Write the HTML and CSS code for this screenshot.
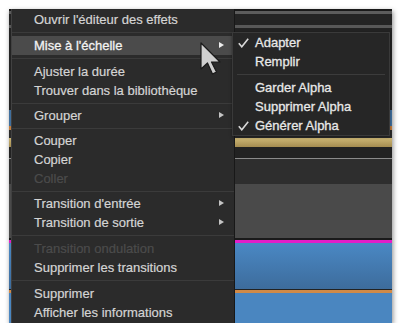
FILE: index.html
```html
<!DOCTYPE html>
<html lang="fr">
<head>
<meta charset="utf-8">
<link rel="stylesheet" href="styles.css">
</head>
<body>
<div class="frame">
  <div class="app">
    <div class="bar b1"></div>
    <div class="bar b2"></div>
    <div class="bar b3"></div>
    <div class="bar b4"></div>
    <div class="bar b5"></div>
    <div class="bar b6"></div>
    <div class="bar b7"></div>
    <div class="bar b8"></div>
    <div class="bar b9"></div>
    <div class="bar b10"></div>
    <div class="bar b11"></div>
    <div class="bar b12"></div>
    <div class="bar b13"></div>
    <div class="bar b14"></div>
    <div class="bar b15"></div>
    <div class="bar b16"></div>
    <div class="bar b17"></div>
    <div class="bar b18"></div>
    <div class="bar b19"></div>
  </div>

  <div class="menu">
    <div class="item">Ouvrir l'éditeur des effets</div>
    <div class="sep sep7"></div>
    <div class="item active sub">Mise à l'échelle</div>
    <div class="sep sep7"></div>
    <div class="item">Ajuster la durée</div>
    <div class="item">Trouver dans la bibliothèque</div>
    <div class="sep"></div>
    <div class="item sub">Grouper</div>
    <div class="sep"></div>
    <div class="item">Couper</div>
    <div class="item">Copier</div>
    <div class="item disabled">Coller</div>
    <div class="sep"></div>
    <div class="item sub">Transition d'entrée</div>
    <div class="item sub">Transition de sortie</div>
    <div class="sep sep7"></div>
    <div class="item disabled">Transition ondulation</div>
    <div class="item">Supprimer les transitions</div>
    <div class="sep sep7"></div>
    <div class="item">Supprimer</div>
    <div class="item">Afficher les informations</div>
  </div>

  <div class="submenu">
    <div class="sitem checked"><svg class="check" width="11" height="10" viewBox="0 0 11 10"><polyline points="0.8,5.2 3.8,8.8 10.2,0.8" fill="none" stroke="#d8d8d8" stroke-width="1.6"/></svg>Adapter</div>
    <div class="sitem">Remplir</div>
    <div class="ssep"></div>
    <div class="sitem">Garder Alpha</div>
    <div class="sitem">Supprimer Alpha</div>
    <div class="sitem checked"><svg class="check" width="11" height="10" viewBox="0 0 11 10"><polyline points="0.8,5.2 3.8,8.8 10.2,0.8" fill="none" stroke="#d8d8d8" stroke-width="1.6"/></svg>Générer Alpha</div>
  </div>

  <svg class="cursor" width="21" height="33" viewBox="0 0 21 33">
    <polygon points="1,1 1,27 7.5,21 12.5,32 16.5,30 11.5,20 20,20" fill="#cfcfcf" stroke="#1a1a1a" stroke-width="1.2" stroke-linejoin="round"/>
  </svg>
</div>
</body>
</html>
```

FILE: styles.css
```css
html, body {
  margin: 0;
  padding: 0;
  background: #ffffff;
}

.frame {
  position: relative;
  margin: 9px 0 0 9px;
  width: 383px;
  height: 314px;
  overflow: hidden;
  background: #1e1e1e;
  box-shadow: 1px 2px 5px rgba(0, 0, 0, 0.45);
  font-family: "Liberation Sans", Arial, sans-serif;
  font-size: 13px;
}

.app {
  display: flex;
  flex-direction: column;
}

.bar { flex: none; }
.b1 { height: 2px; background: #1a1a1a; }
.b2 { height: 3px; background: #5c5c5c; }
.b3 { height: 11px; background: #242424; }
.b4 { height: 3px; background: #585858; }
.b5 { height: 82px; background: #232323; }
.b6 { height: 16px; background: #41709e; }
.b7 { height: 4px; background: #c47c3c; }
.b8 { height: 8px; background: #2a2a2a; }
.b9 { height: 9px; background: linear-gradient(#cdb775, #a48c50); }
.b10 { height: 11px; background: #222222; }
.b11 { height: 1px; background: #8a8a8a; }
.b12 { height: 25px; background: #2e2e2e; }
.b13 { height: 54px; background: #4a4a4a; }
.b14 { height: 2px; background: #1a1a1a; }
.b15 { height: 3px; background: #e21ec8; }
.b16 { height: 46px; background: linear-gradient(#4a88c4, #3d6c9c); }
.b17 { height: 1px; background: #222222; }
.b18 { height: 3px; background: #d08a48; }
.b19 { height: 30px; background: #4a86c0; }

.menu {
  position: absolute;
  left: 2px;
  top: 0;
  width: 222px;
  height: 313px;
  padding-top: 1px;
  background: #2b2b2b;
  border-left: 1px solid #414141;
  border-right: 1px solid #181818;
  color: #d4d4d4;
  -webkit-text-stroke: 0.2px #d4d4d4;
}

.item {
  position: relative;
  height: 19px;
  line-height: 19px;
  padding-left: 22px;
  white-space: nowrap;
}

.item.active {
  background: #4b4b4b;
  color: #f2f2f2;
  -webkit-text-stroke: 0.3px #f2f2f2;
}

.item.disabled {
  color: #4b4b4b;
  -webkit-text-stroke: 0.2px #4b4b4b;
}

.item.sub::after {
  content: "";
  position: absolute;
  right: 10px;
  top: 6px;
  border-left: 5px solid #c4c4c4;
  border-top: 3.5px solid transparent;
  border-bottom: 3.5px solid transparent;
}

.item.active.sub::after {
  border-left-color: #ededed;
}

.sep {
  height: 6px;
  display: flex;
  align-items: center;
}

.sep::before {
  content: "";
  flex: 1;
  height: 1px;
  background: #3b3b3b;
}

.sep7 { height: 7px; }

.submenu {
  position: absolute;
  left: 223px;
  top: 23px;
  width: 156px;
  padding: 0;
  background: #262626;
  border: 1px solid #3a3a3a;
  box-shadow: 0 1px 3px rgba(0, 0, 0, 0.4);
  color: #e8e8e8;
  -webkit-text-stroke: 0.3px #e8e8e8;
}

.sitem {
  position: relative;
  height: 19px;
  line-height: 19px;
  padding-left: 22px;
  white-space: nowrap;
}

.check {
  position: absolute;
  left: 5px;
  top: 5px;
}

.ssep {
  height: 7px;
  display: flex;
  align-items: center;
  padding: 0 4px;
}

.ssep::before {
  content: "";
  flex: 1;
  height: 1px;
  background: #3c3c3c;
}

.cursor {
  position: absolute;
  left: 191px;
  top: 33px;
}
```
